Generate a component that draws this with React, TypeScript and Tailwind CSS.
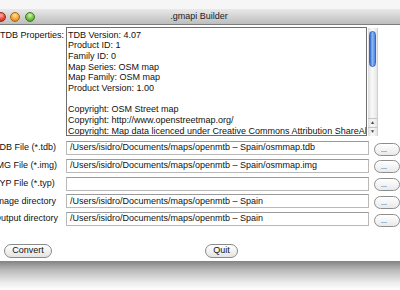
export default function App() {
    const lines = [
        'TDB Version: 4.07',
        'Product ID: 1',
        'Family ID: 0',
        'Map Series: OSM map',
        'Map Family: OSM map',
        'Product Version: 1.00',
        '',
        'Copyright: OSM Street map',
        'Copyright: http://www.openstreetmap.org/',
        'Copyright: Map data licenced under Creative Commons Attribution ShareAlike 2.0',
    ];

    const files = [
        { label: 'TDB File (*.tdb)', value: '/Users/isidro/Documents/maps/openmtb – Spain/osmmap.tdb' },
        { label: 'IMG File (*.img)', value: '/Users/isidro/Documents/maps/openmtb – Spain/osmmap.img' },
        { label: 'TYP File (*.typ)', value: '' },
        { label: 'Image directory', value: '/Users/isidro/Documents/maps/openmtb – Spain' },
        { label: 'Output directory', value: '/Users/isidro/Documents/maps/openmtb – Spain' },
    ];

    return (
        <div className="w-[400px] h-[290px] overflow-hidden bg-white font-['Liberation_Sans',Arial,sans-serif] text-[9px] text-[#111]">
            {/* desktop strip above window */}
            <div className="h-[9px] bg-[#f6f6f6]" />

            {/* title bar */}
            <div className="relative h-[16px] border-b border-[#7d7d7d] bg-[linear-gradient(#e9e9e9,#bdbdbd)] flex items-center">
                <div className="flex items-center gap-[4.5px] ml-[-4.5px]">
                    <span className="w-[10px] h-[10px] rounded-full border border-[#9a2a22] bg-[radial-gradient(circle_at_50%_30%,#ffb3a8,#e2463a_55%,#b8251b)]" />
                    <span className="w-[10px] h-[10px] rounded-full border border-[#a8671a] bg-[radial-gradient(circle_at_50%_30%,#ffe2a0,#f3a530_55%,#c97a12)]" />
                    <span className="w-[10px] h-[10px] rounded-full border border-[#3f7a22] bg-[radial-gradient(circle_at_50%_30%,#d4f5a8,#72c043_55%,#3f8f22)]" />
                </div>
                <span className="absolute left-0 right-0 text-center text-[9px] text-[#222] pr-[2px]">.gmapi Builder</span>
            </div>

            {/* window content */}
            <div className="h-[236px] bg-white pt-[2px] flex flex-col">
                {/* properties */}
                <div className="flex h-[109px]">
                    <div className="w-[66px] pt-[3px] leading-[10.7px]">TDB Properties:</div>
                    <div className="w-[301px] border border-[#6e6e6e] overflow-hidden pl-[1px] pt-[1.5px] leading-[10.7px] whitespace-nowrap">
                        {lines.map((l, i) => (
                            <div key={i} className="h-[10.7px]">{l}</div>
                        ))}
                    </div>
                    {/* scroller */}
                    <div className="ml-[1px] mt-[1px] w-[10px] h-[108px] flex flex-col bg-[linear-gradient(90deg,#dcdcdc,#fafafa_45%,#e6e6e6)] border-r border-[#cfcfcf]">
                        <div className="mt-[3px] mx-[1px] h-[36px] rounded-full border border-[#3d66b8] bg-[linear-gradient(90deg,#2e63cf,#8fbaf4_45%,#4d86e6)]" />
                        <div className="flex-1" />
                        <div className="h-[9px] border-t border-[#c4c4c4] flex items-center justify-center text-[5px] text-[#444]">▲</div>
                        <div className="h-[9px] border-t border-[#c4c4c4] flex items-center justify-center text-[5px] text-[#444]">▼</div>
                    </div>
                </div>

                {/* file rows */}
                <div className="mt-[5px] flex flex-col gap-[3.75px]">
                    {files.map((f) => (
                        <div key={f.label} className="flex items-center h-[14px]">
                            <div className="w-[66px] ml-[-6px] pl-[0px] shrink-0 whitespace-nowrap" style={{ width: 72 }}>{f.label}</div>
                            <div className="w-[310px] h-[14px] border border-[#b9b9b9] border-t-[#9a9a9a] pl-[3px] flex items-center whitespace-nowrap overflow-hidden">
                                {f.value}
                            </div>
                            <div className="ml-[5px] mt-[2px] w-[26px] h-[13px] shrink-0 rounded-full border border-[#8e8e8e] bg-[linear-gradient(#ffffff,#e9e9e9)] flex items-center justify-center text-[7px] leading-none pr-[6px]">
                                ...
                            </div>
                        </div>
                    ))}
                </div>

                {/* bottom buttons */}
                <div className="mt-[18px] flex items-center">
                    <div className="ml-[4px] w-[48px] h-[14px] rounded-full border border-[#8a8a8a] bg-[linear-gradient(#ffffff,#e4e4e4)] flex items-center justify-center">Convert</div>
                    <div className="ml-[153px] w-[33px] h-[14px] rounded-full border border-[#8a8a8a] bg-[linear-gradient(#ffffff,#e4e4e4)] flex items-center justify-center">Quit</div>
                </div>
            </div>

            {/* drop shadow below window */}
            <div className="h-[29px] bg-[linear-gradient(#828282,#b8b8b8_30%,#ececec_75%,#ffffff)]" />
        </div>
    );
}
